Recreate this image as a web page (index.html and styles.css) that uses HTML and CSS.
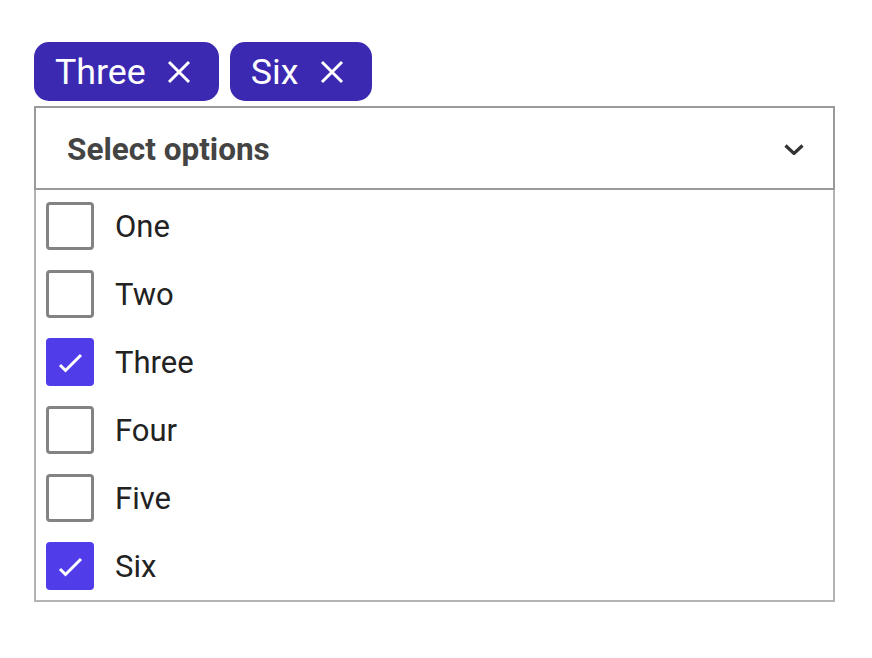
FILE: index.html
```html
<!DOCTYPE html>
<html lang="en">
<head>
<meta charset="utf-8">
<title>Multi select</title>
<link rel="stylesheet" href="styles.css">
</head>
<body>
<div class="wrap">
  <div class="chips">
    <span class="chip"><span class="chip-label">Three</span>
      <svg class="chip-x" viewBox="0 0 24 24" width="24" height="24"><path d="M2 2L22 22M22 2L2 22"/></svg>
    </span>
    <span class="chip"><span class="chip-label">Six</span>
      <svg class="chip-x" viewBox="0 0 24 24" width="24" height="24"><path d="M2 2L22 22M22 2L2 22"/></svg>
    </span>
  </div>
  <div class="select">
    <span class="select-label">Select options</span>
    <svg class="chevron" viewBox="0 0 20 11" width="20" height="11"><path d="M1.5 1.5L10 9.5L18.5 1.5"/></svg>
  </div>
  <ul class="list">
    <li class="option"><span class="box"></span><span class="opt-label">One</span></li>
    <li class="option"><span class="box"></span><span class="opt-label">Two</span></li>
    <li class="option"><span class="box checked"><svg viewBox="0 0 48 48" width="48" height="48"><path d="M14 27L19.5 32.5L35 17"/></svg></span><span class="opt-label">Three</span></li>
    <li class="option"><span class="box"></span><span class="opt-label">Four</span></li>
    <li class="option"><span class="box"></span><span class="opt-label">Five</span></li>
    <li class="option"><span class="box checked"><svg viewBox="0 0 48 48" width="48" height="48"><path d="M14 27L19.5 32.5L35 17"/></svg></span><span class="opt-label">Six</span></li>
  </ul>
</div>
</body>
</html>
```
FILE: styles.css
```css
html, body {
  margin: 0;
  padding: 0;
  background: #ffffff;
}
body {
  font-family: Roboto, "Liberation Sans", sans-serif;
}
.wrap {
  width: 801px;
  padding: 42px 0 0 34px;
}
.chips {
  display: flex;
  gap: 11px;
  margin-bottom: 5px;
}
.chip {
  display: flex;
  align-items: center;
  height: 59px;
  padding: 0 28px 0 21px;
  gap: 21px;
  background: #3b29b1;
  border-radius: 15px;
  color: #ffffff;
  box-sizing: border-box;
}
.chip-label {
  font-size: 35.8px;
  line-height: 1;
  margin-top: 2px;
}
.chip-x {
  display: block;
  fill: none;
  stroke: #ffffff;
  stroke-width: 3;
}
.select {
  display: flex;
  align-items: center;
  justify-content: space-between;
  height: 84px;
  box-sizing: border-box;
  border: 2px solid #9a9a9a;
  padding: 0 29px 0 31px;
}
.select-label {
  font-size: 31.5px;
  font-weight: 700;
  color: #444444;
  margin-top: 2px;
}
.chevron {
  display: block;
  fill: none;
  stroke: #333333;
  stroke-width: 3.2;
  margin-top: 2px;
}
.list {
  list-style: none;
  margin: 0;
  padding: 12px 10px 10px 10px;
  border: 2px solid #b3b3b3;
  border-top: 0;
  display: flex;
  flex-direction: column;
  gap: 20px;
}
.option {
  display: flex;
  align-items: center;
  gap: 21px;
  height: 48px;
}
.box {
  width: 48px;
  height: 48px;
  box-sizing: border-box;
  border: 3px solid #838383;
  border-radius: 4px;
  flex: none;
}
.box.checked {
  border: 0;
  background: #503de9;
}
.box svg {
  display: block;
  fill: none;
  stroke: #ffffff;
  stroke-width: 3;
}
.opt-label {
  font-size: 31px;
  color: #222222;
  margin-top: 1px;
}
```
